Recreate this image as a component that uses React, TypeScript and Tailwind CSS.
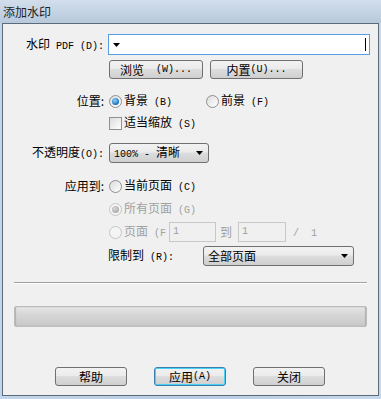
import React from 'react';

// 半角文字（助记符等），宽度按 6px 一个字符
const H: React.FC<{ children: React.ReactNode }> = ({ children }) => (
  <span className="font-['Liberation_Mono',monospace] text-[10px]">{children}</span>
);

const Radio: React.FC<{ checked?: boolean; disabled?: boolean }> = ({ checked, disabled }) => (
  <span
    className={`relative inline-flex h-[13px] w-[13px] shrink-0 items-center justify-center rounded-full border ${
      disabled ? 'border-[#c5c5c5] bg-[#f4f4f4]' : 'border-[#8e8f8f] bg-[linear-gradient(135deg,#dcdcdc,#ffffff)]'
    }`}
  >
    {checked && (
      <span
        className={`h-[7px] w-[7px] rounded-full ${
          disabled
            ? 'bg-[radial-gradient(circle_at_40%_35%,#d8d8d8,#9a9a9a)]'
            : 'bg-[radial-gradient(circle_at_40%_35%,#8fd3ff,#1a6fb8_70%,#0b3f7a)]'
        }`}
      />
    )}
  </span>
);

const Btn: React.FC<{ children: React.ReactNode; w: string; focused?: boolean }> = ({ children, w, focused }) => (
  <div
    className={`flex h-[19px] ${w} items-center justify-center rounded-[3px] border ${
      focused ? 'border-[#3c7fb1] shadow-[inset_0_0_0_1px_#48d0f5]' : 'border-[#707070]'
    } bg-[linear-gradient(#f2f2f2_0%,#ebebeb_45%,#dddddd_50%,#cfcfcf_100%)] text-[12px] leading-none text-black`}
  >
    {children}
  </div>
);

const Combo: React.FC<{ children: React.ReactNode; w: string }> = ({ children, w }) => (
  <div
    className={`flex h-[20px] ${w} items-center rounded-[3px] border border-[#707070] bg-[linear-gradient(#f2f2f2_0%,#ebebeb_45%,#dddddd_50%,#cfcfcf_100%)] pl-[4px] pr-[5px] text-[12px] leading-none`}
  >
    <span className="flex-1">{children}</span>
    <svg width="7" height="4" viewBox="0 0 7 4">
      <path d="M0 0H7L3.5 4Z" fill="#000" />
    </svg>
  </div>
);

export default function App() {
  return (
    <div className="flex h-[399px] w-[381px] flex-col bg-[linear-gradient(90deg,#c3d5ea,#b9cde4_50%,#c6d8ec)] font-['Noto_Sans_CJK_SC',sans-serif] text-[12px] text-black">
      {/* 标题栏 */}
      <div className="flex h-[23px] shrink-0 items-center bg-[linear-gradient(#d2deeb,#b8c9dc)] pl-[3px] text-[12px] leading-none text-[#1e1e1e]">
        添加水印
      </div>

      {/* 客户区 */}
      <div className="mx-[2px] mb-[3px] flex flex-1 flex-col border border-[#5c6a7a] bg-[#f0f0f0]">
        {/* 水印 PDF */}
        <div className="mt-[10px] flex items-center">
          <div className="w-[102px] pr-[1px] text-right leading-none">
            水印<H> PDF (D):</H>
          </div>
          <div className="ml-[3px] flex h-[21px] w-[262px] items-center border border-[#569de5] bg-white pl-[4px] pr-[3px]">
            <svg width="7" height="4" viewBox="0 0 7 4">
              <path d="M0 0H7L3.5 4Z" fill="#000" />
            </svg>
            <span className="flex-1" />
            <span className="h-[13px] w-[1px] bg-black" />
          </div>
        </div>

        <div className="mt-[5px] flex gap-[7px] pl-[106px]">
          <Btn w="w-[94px]">
            浏览<H>&nbsp;&nbsp;(W)...</H>
          </Btn>
          <Btn w="w-[93px]">
            内置<H>(U)...</H>
          </Btn>
        </div>

        {/* 位置 */}
        <div className="mt-[15px] flex items-center">
          <div className="w-[102px] pr-[1px] text-right leading-none">位置:</div>
          <div className="ml-[4px] flex items-center gap-[2px] leading-none">
            <Radio checked />
            <span>
              背景<H>&nbsp;(B)</H>
            </span>
          </div>
          <div className="ml-[34px] flex items-center gap-[2px] leading-none">
            <Radio />
            <span>
              前景<H>&nbsp;(F)</H>
            </span>
          </div>
        </div>

        <div className="mt-[8px] flex items-center gap-[2px] pl-[106px] leading-none">
          <span className="h-[13px] w-[13px] border border-[#8e8f8f] bg-[linear-gradient(135deg,#dcdcdc,#ffffff)]" />
          <span>
            适当缩放<H>&nbsp;(S)</H>
          </span>
        </div>

        {/* 不透明度 */}
        <div className="mt-[13px] flex items-center">
          <div className="w-[102px] pr-[1px] text-right leading-none">
            不透明度<H>(O):</H>
          </div>
          <div className="ml-[4px]">
            <Combo w="w-[100px]">
              <H>100% - </H>清晰
            </Combo>
          </div>
        </div>

        {/* 应用到 */}
        <div className="mt-[16px] flex items-center">
          <div className="w-[102px] pr-[1px] text-right leading-none">应用到:</div>
          <div className="ml-[4px] flex items-center gap-[2px] leading-none">
            <Radio />
            <span>
              当前页面<H>&nbsp;(C)</H>
            </span>
          </div>
        </div>

        <div className="mt-[9px] flex items-center gap-[2px] pl-[106px] leading-none text-[#a0a0a0]">
          <Radio checked disabled />
          <span>
            所有页面<H>&nbsp;(G)</H>
          </span>
        </div>

        <div className="mt-[6px] flex items-center pl-[106px] leading-none text-[#a0a0a0]">
          <Radio disabled />
          <span className="ml-[2px]">
            页面<H>&nbsp;(F</H>
          </span>
          <div className="ml-[3px] flex h-[20px] w-[47px] items-center border border-[#c8c8c8] bg-[#f0f0f0] pl-[3px]">
            <H>1</H>
          </div>
          <span className="ml-[4px]">到</span>
          <div className="ml-[6px] flex h-[20px] w-[48px] items-center border border-[#c8c8c8] bg-[#f0f0f0] pl-[3px]">
            <H>1</H>
          </div>
          <span className="ml-[7px]">
            <H>/&nbsp;&nbsp;1</H>
          </span>
        </div>

        {/* 限制到 */}
        <div className="mt-[4px] flex items-center pl-[105px]">
          <span className="w-[95px] leading-none">
            限制到<H>&nbsp;(R):</H>
          </span>
          <Combo w="w-[151px]">全部页面</Combo>
        </div>

        {/* 分隔线 */}
        <div className="mx-[11px] mt-[16px] h-[2px] border-t border-b border-t-[#a0a0a0] border-b-white" />

        {/* 进度条 */}
        <div className="mx-[11px] mt-[22px] h-[21px] rounded-[2px] border border-[#bcbcbc] bg-[linear-gradient(#e6e6e6,#d6d6d6_40%,#c8c8c8)] shadow-[inset_1px_0_1px_#b0b0b0,inset_-1px_0_1px_#b0b0b0]" />

        {/* 按钮 */}
        <div className="mt-[40px] flex gap-[27px] pl-[52px]">
          <Btn w="w-[72px]">帮助</Btn>
          <Btn w="w-[72px]" focused>
            应用<H>(A)</H>
          </Btn>
          <Btn w="w-[72px]">关闭</Btn>
        </div>
      </div>
    </div>
  );
}
